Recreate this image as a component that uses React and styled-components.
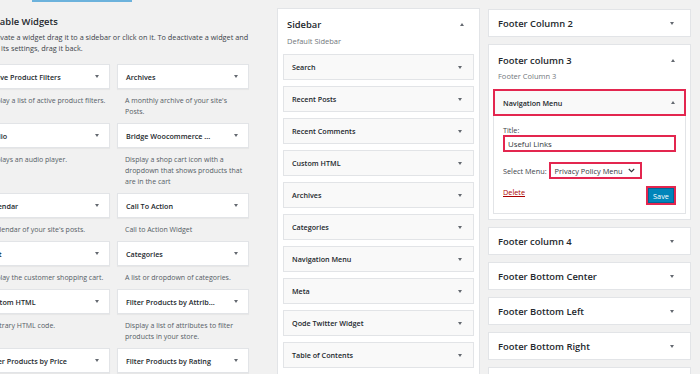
import React from 'react';
import styled, { createGlobalStyle, css } from 'styled-components';

const RED = '#e3264f';

const GlobalStyle = createGlobalStyle`
  html, body {
    margin: 0;
    padding: 0;
    background: #f1f1f1;
  }
  body {
    font-family: "Open Sans", "Noto Sans", "DejaVu Sans", sans-serif;
    color: #23282d;
  }
`;

const Page = styled.div`
  display: flex;
  align-items: flex-start;
  width: 700px;
  height: 374px;
  overflow: hidden;
`;

/* ---- available widgets ---- */

const Available = styled.section`
  flex: 0 0 271px;
  margin-left: -22px;
`;

const PreviewEdge = styled.div`
  width: 100px;
  height: 2px;
  margin-left: 54px;
  background: #6cb2dc;
`;

const Heading = styled.h2`
  margin: 12px 0 0;
  font-size: 9.4px;
  font-weight: 600;
  line-height: 16px;
  white-space: nowrap;
`;

const Intro = styled.p`
  margin: 2px 0 0;
  font-size: 7.3px;
  line-height: 11px;
  color: #3c434a;
  white-space: nowrap;
`;

const WidgetGrid = styled.div`
  display: grid;
  grid-template-columns: 132px 132px;
  column-gap: 7px;
  margin-top: 10px;
`;

const WidgetCard = styled.div`
  height: 25px;
  box-sizing: border-box;
  display: flex;
  align-items: center;
  justify-content: space-between;
  padding: 0 10px 0 8px;
  background: #fff;
  border: 1px solid #e2e4e7;
  box-shadow: 0 1px 1px rgba(0, 0, 0, 0.04);
  font-size: 7.2px;
  font-weight: 600;
  white-space: nowrap;
`;

const WidgetDesc = styled.div`
  padding: 6px 0 6px 8px;
  font-size: 7px;
  line-height: 11px;
  color: #555d66;
  white-space: nowrap;
`;

const Caret = styled.span`
  width: 0;
  height: 0;
  flex-shrink: 0;
  border-left: 2.5px solid transparent;
  border-right: 2.5px solid transparent;
  ${({ $up }) =>
    $up
      ? css`
          border-bottom: 3.5px solid #646970;
        `
      : css`
          border-top: 3.5px solid #646970;
        `}
`;

/* ---- sidebar area ---- */

const Area = styled.section`
  flex: 0 0 203px;
  box-sizing: border-box;
  margin: 8px 0 0 28px;
  padding: 0 5px;
  background: #fff;
  border: 1px solid #e2e4e7;
`;

const AreaHead = styled.div`
  display: flex;
  align-items: center;
  justify-content: space-between;
  height: 16px;
  padding: 7px 10px 0 4px;
  font-size: 9.4px;
  font-weight: 600;
`;

const AreaSub = styled.div`
  margin-top: ${({ $gap }) => $gap}px;
  padding-left: ${({ $indent }) => $indent}px;
  font-size: 7.5px;
  line-height: 11px;
  color: #72777c;
`;

const ItemList = styled.div`
  display: flex;
  flex-direction: column;
  gap: 6px;
  margin-top: 7.5px;
`;

const Item = styled.div`
  height: 26px;
  box-sizing: border-box;
  display: flex;
  align-items: center;
  justify-content: space-between;
  padding: 0 11px 0 8px;
  background: #f9f9f9;
  border: 1px solid #e2e4e7;
  font-size: 7.2px;
  font-weight: 600;
`;

/* ---- footer areas ---- */

const Footers = styled.div`
  flex: 0 0 203px;
  display: flex;
  flex-direction: column;
  gap: 7px;
  margin: 9px 0 0 8px;
`;

const FooterBar = styled.div`
  height: 28px;
  box-sizing: border-box;
  display: flex;
  align-items: center;
  justify-content: space-between;
  padding: 0 16px 0 9px;
  background: #fff;
  border: 1px solid #e2e4e7;
  font-size: 9.4px;
  font-weight: 600;
`;

const FooterOpen = styled.div`
  box-sizing: border-box;
  padding: 0 4px 5px;
  background: #fff;
  border: 1px solid #e2e4e7;
`;

const OpenHead = styled(AreaHead)`
  padding: 7px 11px 0 5px;
`;

const NavWidget = styled.div`
  margin-top: 7.5px;
`;

const NavHead = styled.div`
  height: 27px;
  box-sizing: border-box;
  display: flex;
  align-items: center;
  justify-content: space-between;
  padding: 0 9px 0 8px;
  background: #f9f9f9;
  border: 2px solid ${RED};
  font-size: 7.2px;
  font-weight: 600;
`;

const NavBody = styled.div`
  padding: 9px 9px 8px;
  border: 1px solid #e2e4e7;
  border-top: none;
  font-size: 7.3px;
`;

const Label = styled.div`
  line-height: 10px;
  color: #3c434a;
`;

const TextInput = styled.div`
  height: 17px;
  box-sizing: border-box;
  display: flex;
  align-items: center;
  padding: 0 3px;
  border: 2px solid ${RED};
  background: #fff;
  font-size: 7.8px;
  color: #32373c;
`;

const SelectRow = styled.div`
  display: flex;
  align-items: center;
  gap: 2px;
  margin-top: 10px;
  color: #3c434a;
`;

const Select = styled.div`
  width: 93px;
  height: 17px;
  box-sizing: border-box;
  display: flex;
  align-items: center;
  justify-content: space-between;
  padding: 0 5px 0 4px;
  border: 2px solid ${RED};
  background: #fff;
  font-size: 7.4px;
  color: #32373c;
  white-space: nowrap;
`;

const Actions = styled.div`
  display: flex;
  justify-content: space-between;
  align-items: flex-start;
  margin-top: 7px;
`;

const DeleteLink = styled.a`
  margin-top: 1px;
  color: #a00;
  text-decoration: underline;
  font-size: 7.3px;
`;

const SaveButton = styled.button`
  width: 30px;
  height: 19px;
  box-sizing: border-box;
  padding: 0;
  border: 2px solid ${RED};
  background: #0085ba;
  box-shadow: inset 0 0 0 1px #006799;
  color: #fff;
  font-family: inherit;
  font-size: 7.3px;
`;

const leftWidgets = [
  ['Active Product Filters', ['Display a list of active product filters.']],
  ['Archives', ["A monthly archive of your site's", 'Posts.']],
  ['Audio', ['Displays an audio player.']],
  ['Bridge Woocommerce ...', ['Display a shop cart icon with a', 'dropdown that shows products that', 'are in the cart']],
  ['Calendar', ["A calendar of your site's posts."]],
  ['Call To Action', ['Call to Action Widget']],
  ['Cart', ['Display the customer shopping cart.']],
  ['Categories', ['A list or dropdown of categories.']],
  ['Custom HTML', ['Arbitrary HTML code.']],
  ['Filter Products by Attrib...', ['Display a list of attributes to filter', 'products in your store.']],
  ['Filter Products by Price', ['Display a price filter slider in a widget']],
  ['Filter Products by Rating', ['Display a list of star ratings to filter']],
];

const sidebarItems = [
  'Search',
  'Recent Posts',
  'Recent Comments',
  'Custom HTML',
  'Archives',
  'Categories',
  'Navigation Menu',
  'Meta',
  'Qode Twitter Widget',
  'Table of Contents',
  'Text',
];

const lowerFooters = [
  'Footer column 4',
  'Footer Bottom Center',
  'Footer Bottom Left',
  'Footer Bottom Right',
  'Footer Top',
];

const Chevron = () => (
  <svg width="7" height="5" viewBox="0 0 7 5">
    <polyline points="0.8,1 3.5,3.7 6.2,1" fill="none" stroke="#32373c" strokeWidth="1.1" />
  </svg>
);

const App = () => (
  <>
    <GlobalStyle />
    <Page>
      <Available>
        <PreviewEdge />
        <Heading>Available Widgets</Heading>
        <Intro>
          To activate a widget drag it to a sidebar or click on it. To deactivate a widget and
          <br />
          delete its settings, drag it back.
        </Intro>
        <WidgetGrid>
          {leftWidgets.map(([title, lines]) => (
            <div key={title}>
              <WidgetCard>
                {title}
                <Caret />
              </WidgetCard>
              <WidgetDesc>
                {lines.map((l) => (
                  <div key={l}>{l}</div>
                ))}
              </WidgetDesc>
            </div>
          ))}
        </WidgetGrid>
      </Available>

      <Area>
        <AreaHead>
          Sidebar
          <Caret $up />
        </AreaHead>
        <AreaSub $gap={3.5} $indent={4}>Default Sidebar</AreaSub>
        <ItemList>
          {sidebarItems.map((t) => (
            <Item key={t}>
              {t}
              <Caret />
            </Item>
          ))}
        </ItemList>
      </Area>

      <Footers>
        <FooterBar>
          Footer Column 2
          <Caret />
        </FooterBar>
        <FooterOpen>
          <OpenHead>
            Footer column 3
            <Caret $up />
          </OpenHead>
          <AreaSub $gap={2.5} $indent={5}>Footer Column 3</AreaSub>
          <NavWidget>
            <NavHead>
              Navigation Menu
              <Caret $up />
            </NavHead>
            <NavBody>
              <Label>Title:</Label>
              <TextInput>Useful Links</TextInput>
              <SelectRow>
                Select Menu:
                <Select>
                  Privacy Policy Menu
                  <Chevron />
                </Select>
              </SelectRow>
              <Actions>
                <DeleteLink>Delete</DeleteLink>
                <SaveButton>Save</SaveButton>
              </Actions>
            </NavBody>
          </NavWidget>
        </FooterOpen>
        {lowerFooters.map((t) => (
          <FooterBar key={t}>
            {t}
            <Caret />
          </FooterBar>
        ))}
      </Footers>
    </Page>
  </>
);

export default App;
